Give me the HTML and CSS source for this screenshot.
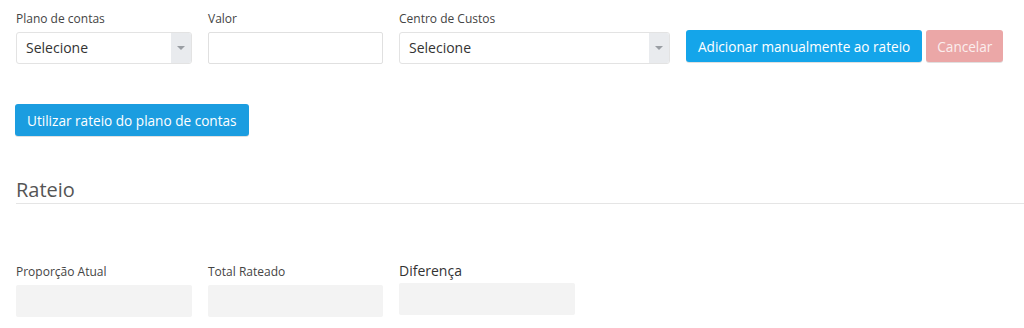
FILE: index.html
```html
<!DOCTYPE html>
<html lang="pt-BR">
<head>
  <meta charset="UTF-8">
  <title>Rateio</title>
  <link rel="stylesheet" href="styles.css">
</head>
<body>

  <!-- Linha de entrada manual -->
  <div class="form-row">
    <div class="field field--plano">
      <label>Plano de contas</label>
      <div class="select">
        <span class="select__value">Selecione</span>
        <span class="select__arrow"></span>
      </div>
    </div>
    <div class="field field--valor">
      <label>Valor</label>
      <input class="input" type="text">
    </div>
    <div class="field field--centro">
      <label>Centro de Custos</label>
      <div class="select">
        <span class="select__value">Selecione</span>
        <span class="select__arrow"></span>
      </div>
    </div>
    <button class="btn btn--primary">Adicionar manualmente ao rateio</button>
    <button class="btn btn--cancel">Cancelar</button>
  </div>

  <div class="actions">
    <button class="btn btn--primary btn--alt">Utilizar rateio do plano de contas</button>
  </div>

  <h3 class="section-title">Rateio</h3>

  <!-- Totais -->
  <div class="totals">
    <div class="field field--plano">
      <label>Proporção Atual</label>
      <div class="readonly"></div>
    </div>
    <div class="field field--valor">
      <label>Total Rateado</label>
      <div class="readonly"></div>
    </div>
    <div class="field field--dif">
      <label class="label--big">Diferença</label>
      <div class="readonly"></div>
    </div>
  </div>

</body>
</html>
```

FILE: styles.css
```css
*, *::before, *::after {
  margin: 0;
  padding: 0;
  box-sizing: border-box;
}
body {
  font-family: "Open Sans", sans-serif;
  color: #333;
  background: #fff;
  padding: 10px 0 0 16px;
}

/* fields */
.field label {
  display: block;
  font-size: 12px;
  line-height: 17px;
  color: #444;
  margin-bottom: 5px;
}
.field--plano { width: 176px; }
.field--valor { width: 175px; }
.field--centro { width: 271px; }
.field--dif { width: 176px; }

.form-row {
  display: flex;
  align-items: flex-end;
  gap: 16px;
}

.select {
  display: flex;
  height: 32px;
  border: 1px solid #e3e3e3;
  border-radius: 3px;
  background: #fff;
  overflow: hidden;
}
.select__value {
  flex: 1;
  font-size: 14px;
  line-height: 30px;
  padding-left: 9px;
  color: #333;
}
.select__arrow {
  width: 20px;
  background: #e9ebee;
  position: relative;
}
.select__arrow::after {
  content: "";
  position: absolute;
  left: 6px;
  top: 13px;
  border-left: 4px solid transparent;
  border-right: 4px solid transparent;
  border-top: 4px solid #9a9ea3;
}

.input {
  display: block;
  width: 100%;
  height: 32px;
  border: 1px solid #e0e0e0;
  border-radius: 2px;
  font-family: inherit;
}

/* buttons */
.btn {
  font-family: inherit;
  font-size: 13.6px;
  height: 32px;
  border: 0;
  border-radius: 3px;
  color: #fff;
  padding: 0 12px;
  margin-bottom: 2px;
  box-shadow: 0 1px 0 rgba(0, 0, 0, 0.12);
}
.btn--primary {
  background: #14a5ea;
}
.btn--cancel {
  background: #eba7a7;
  color: #fbeeee;
  padding: 0 11px;
  margin-left: -12px;
}
.btn--alt {
  background: #1b9de0;
  padding: 0 12px;
  margin: 0 0 0 -1px;
}

.actions {
  margin-top: 40px;
}

/* section */
.section-title {
  font-size: 20px;
  font-weight: 400;
  color: #555;
  line-height: 27px;
  margin-top: 40px;
  border-bottom: 1px solid #e5e5e5;
}

.totals {
  display: flex;
  align-items: flex-end;
  gap: 16px;
  margin-top: 57px;
}
.readonly {
  height: 32px;
  background: #f3f3f3;
  border-radius: 2px;
}
.label--big {
  font-size: 14px !important;
  color: #333 !important;
  line-height: 19px !important;
  margin-bottom: 3px !important;
}
.field--dif {
  margin-bottom: 2px;
}
```
